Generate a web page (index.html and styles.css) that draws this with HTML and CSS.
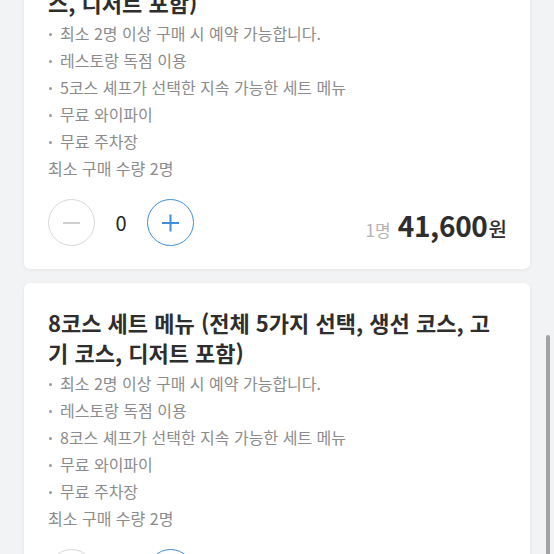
FILE: index.html
```html
<!DOCTYPE html>
<html lang="ko">
  <head>
    <meta charset="UTF-8" />
    <meta name="viewport" content="width=device-width, initial-scale=1.0" />
    <title>세트 메뉴 선택</title>
    <link rel="stylesheet" href="styles.css">
  </head>
  <body>
    <main class="menu-list">
      <section class="menu-card">
        <h2 class="menu-title">5코스 세트 메뉴 (전체 5가지 선택, 수프, 고기 코스, 디저트 포함)</h2>
        <ul class="menu-info">
          <li>최소 2명 이상 구매 시 예약 가능합니다.</li>
          <li>레스토랑 독점 이용</li>
          <li>5코스 셰프가 선택한 지속 가능한 세트 메뉴</li>
          <li>무료 와이파이</li>
          <li>무료 주차장</li>
        </ul>
        <p class="min-qty">최소 구매 수량 2명</p>
        <div class="order-row">
          <div class="stepper">
            <button class="step-btn minus" type="button" aria-label="빼기"></button>
            <span class="count">0</span>
            <button class="step-btn plus" type="button" aria-label="더하기"></button>
          </div>
          <div class="price">
            <span class="per">1명</span>
            <strong class="amount">41,600</strong><span class="won">원</span>
          </div>
        </div>
      </section>

      <section class="menu-card">
        <h2 class="menu-title">8코스 세트 메뉴 (전체 5가지 선택, 생선 코스, 고기 코스, 디저트 포함)</h2>
        <ul class="menu-info">
          <li>최소 2명 이상 구매 시 예약 가능합니다.</li>
          <li>레스토랑 독점 이용</li>
          <li>8코스 셰프가 선택한 지속 가능한 세트 메뉴</li>
          <li>무료 와이파이</li>
          <li>무료 주차장</li>
        </ul>
        <p class="min-qty">최소 구매 수량 2명</p>
        <div class="order-row">
          <div class="stepper">
            <button class="step-btn minus" type="button" aria-label="빼기"></button>
            <span class="count">0</span>
            <button class="step-btn plus" type="button" aria-label="더하기"></button>
          </div>
          <div class="price">
            <span class="per">1명</span>
            <strong class="amount">64,000</strong><span class="won">원</span>
          </div>
        </div>
      </section>
    </main>
    <div class="scroll-thumb"></div>
  </body>
</html>
```

FILE: styles.css
```css
:root {
  --bg: #f2f3f5;
  --card-bg: #ffffff;
  --text: #2e2e2e;
  --muted: #8b8b8b;
  --blue: #3f8fd8;
  --line: #d8d8d8;
}
html {
  overflow: hidden;
}
body {
  margin: 0;
  background: var(--bg);
  font-family: "Noto Sans CJK KR", "Noto Sans", sans-serif;
  color: var(--text);
}
.menu-list {
  display: flex;
  flex-direction: column;
  gap: 14px;
  margin-top: -67px;
  padding: 0 24px 40px;
}
.menu-card {
  background: var(--card-bg);
  border-radius: 6px;
  box-shadow: 0 1px 4px rgba(0, 0, 0, 0.06);
  padding: 24px 24px 23px;
}
.menu-title {
  margin: 0 0 3px;
  font-size: 22px;
  font-weight: 700;
  line-height: 30px;
  color: var(--text);
}
.menu-info {
  list-style: none;
  margin: 0;
  padding: 0;
}
.menu-info li,
.min-qty {
  font-size: 16px;
  line-height: 27px;
  color: var(--muted);
}
.menu-info li {
  position: relative;
  padding-left: 12px;
}
.menu-info li::before {
  content: "";
  position: absolute;
  left: 1px;
  top: 13px;
  width: 3px;
  height: 3px;
  border-radius: 50%;
  background: #9a9a9a;
}
.min-qty {
  margin: 0 0 17px;
}
.order-row {
  display: flex;
  justify-content: space-between;
  align-items: center;
}
.stepper {
  display: flex;
  align-items: center;
}
.count {
  width: 52px;
  text-align: center;
  font-size: 20px;
  color: #222;
}
.step-btn {
  position: relative;
  width: 47px;
  height: 47px;
  padding: 0;
  border-radius: 50%;
  background: #fff;
  border: 1.5px solid var(--line);
}
.step-btn::before,
.step-btn::after {
  content: "";
  position: absolute;
  left: 50%;
  top: 50%;
  width: 17px;
  height: 2px;
  margin: -1px 0 0 -8.5px;
  background: #cfcfcf;
}
.minus::after {
  display: none;
}
.plus {
  border-color: var(--blue);
}
.plus::before,
.plus::after {
  background: var(--blue);
}
.plus::after {
  transform: rotate(90deg);
}
.price {
  display: flex;
  align-items: baseline;
  align-self: flex-end;
  line-height: 30px;
  margin: 0 -1px 1px 0;
}
.per {
  font-size: 17px;
  color: #b3b3b3;
  margin-right: 7px;
}
.amount {
  font-size: 28px;
  font-weight: 700;
  letter-spacing: -0.3px;
}
.won {
  font-size: 20px;
  font-weight: 500;
  margin-left: 1px;
}
.scroll-thumb {
  position: fixed;
  top: 335px;
  right: 4px;
  width: 4px;
  height: 240px;
  border-radius: 2px;
  background: #a3a3a3;
}
```
